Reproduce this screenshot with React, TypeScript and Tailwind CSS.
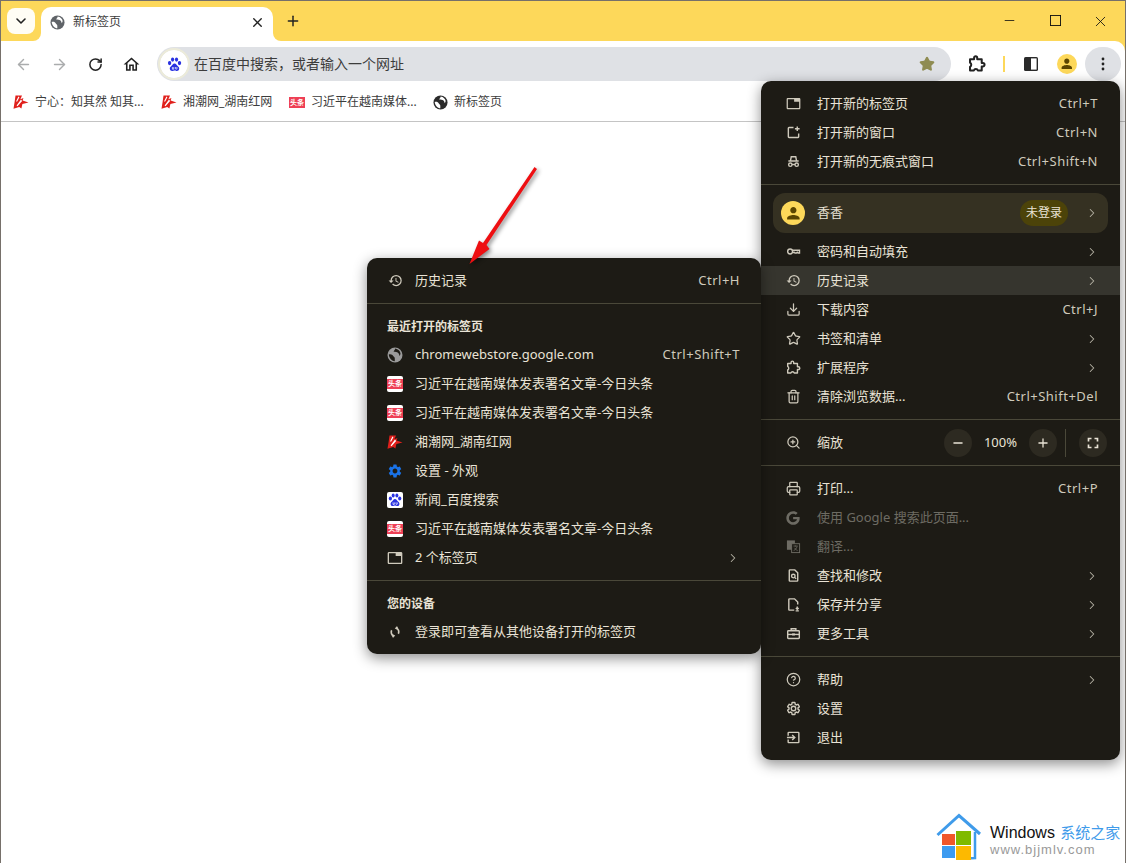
import React from "react";
import {
  ArrowLeft, ArrowRight, RotateCw, X, Plus, ChevronDown, ChevronRight, Minus, Star, Download, Trash2,
  ZoomIn, Printer, CircleHelp,
} from "lucide-react";
import { FaGoogle } from "react-icons/fa";

const P = {
  tab: "M21 3H3c-1.1 0-2 .9-2 2v14c0 1.1.9 2 2 2h18c1.1 0 2-.9 2-2V5c0-1.1-.9-2-2-2zm0 16H3V5h10v4h8v10z",
  history: "M13 3a9 9 0 0 0-9 9H1l3.89 3.89.07.14L9 12H6c0-3.87 3.13-7 7-7s7 3.13 7 7-3.13 7-7 7c-1.93 0-3.68-.79-4.94-2.06l-1.42 1.42A8.954 8.954 0 0 0 13 21a9 9 0 0 0 0-18zm-1 5v5l4.28 2.54.72-1.21-3.5-2.08V8H12z",
  person: "M12 12c2.21 0 4-1.79 4-4s-1.79-4-4-4-4 1.79-4 4 1.79 4 4 4zm0 2c-2.67 0-8 1.34-8 4v2h16v-2c0-2.66-5.33-4-8-4z",
  gear: "M19.14 12.94c.04-.3.06-.61.06-.94 0-.32-.02-.64-.07-.94l2.03-1.58a.49.49 0 0 0 .12-.61l-1.92-3.32a.488.488 0 0 0-.59-.22l-2.39.96c-.5-.38-1.03-.7-1.62-.94l-.36-2.54a.484.484 0 0 0-.48-.41h-3.84c-.24 0-.43.17-.47.41l-.36 2.54c-.59.24-1.13.57-1.62.94l-2.39-.96c-.22-.08-.47 0-.59.22L2.74 8.87c-.12.21-.08.47.12.61l2.03 1.58c-.05.3-.09.63-.09.94s.02.64.07.94l-2.03 1.58a.49.49 0 0 0-.12.61l1.92 3.32c.12.22.37.29.59.22l2.39-.96c.5.38 1.03.7 1.62.94l.36 2.54c.05.24.24.41.48.41h3.84c.24 0 .44-.17.47-.41l.36-2.54c.59-.24 1.13-.56 1.62-.94l2.39.96c.22.08.47 0 .59-.22l1.92-3.32c.12-.22.07-.47-.12-.61l-2.01-1.58zM12 15.6c-1.98 0-3.6-1.62-3.6-3.6s1.62-3.6 3.6-3.6 3.6 1.62 3.6 3.6-1.62 3.6-3.6 3.6z",
  home: "M12 5.69l5 4.5V18h-2v-6H9v6H7v-7.81l5-4.5M12 3L2 12h3v8h6v-6h2v6h6v-8h3L12 3z",
};

type IP = { className?: string };
const Fill = ({ d, className = "w-[15px] h-[15px]" }: { d: string; className?: string }) => (
  <svg viewBox="0 0 24 24" fill="currentColor" className={className}><path d={d} /></svg>
);
const Line = ({ className = "w-[15px] h-[15px]", children }: { className?: string; children: React.ReactNode }) => (
  <svg viewBox="0 0 16 16" fill="none" stroke="currentColor" strokeWidth="1.5" className={className}>{children}</svg>
);
const Globe = ({ className = "w-[15px] h-[15px]", hole = "#fff" }: { className?: string; hole?: string }) => (
  <svg viewBox="0 0 16 16" className={className}>
    <circle cx="8" cy="8" r="7.5" fill="currentColor" />
    <path d="M1.8 7.4c2.2-.6 3.6.2 4.4 1.6.5.9 1.6 1.1 1.6 2.4v2.8c-2.8-.4-5.6-2.8-6-6.8Z" fill={hole} />
    <path d="M8.2 1.5c-.2 1.6-1.4 2-1.6 3.2 1.8.2 3.4-.2 4.6 1.2.6.8 1.2 1.6 1.2 3 .6-.5 1-1.4 1.1-2.4-.3-2.3-2.3-4.6-5.3-5Z" fill={hole} />
  </svg>
);
const TabIcon = (p: IP) => <Fill d={P.tab} className={p.className} />;
const HistoryIcon = (p: IP) => <Fill d={P.history} className={p.className} />;
const GearOutline = () => (
  <svg viewBox="0 0 24 24" fill="none" stroke="currentColor" strokeWidth="2.2" className="w-[15px] h-[15px]"><path d={P.gear} /></svg>
);
const ExtOutline = ({ className = "w-[15px] h-[15px]", w = "1.5" }: { className?: string; w?: string }) => (
  <svg viewBox="0 0 16 16" fill="none" stroke="currentColor" strokeWidth={w} strokeLinejoin="round" className={className}>
    <path d="M1.8 3.8h3.6V2.6a1.4 1.4 0 0 1 2.8 0v1.2h4v3.4h1a1.5 1.5 0 0 1 0 3h-1v3.6H8.8a1.9 1.9 0 0 0-3.6 0H1.8v-3.2a2.2 2.2 0 0 0 0-3.8Z" />
  </svg>
);
const NewWin = () => (
  <Line><path d="M8 2.7H3.2a.7.7 0 0 0-.7.7v9.2c0 .4.3.7.7.7h9.6c.4 0 .7-.3.7-.7V9" /><path d="M12 1.5v5M9.5 4h5" /></Line>
);
const Incognito = () => (
  <Line>
    <path d="M2.5 7.4h11M4.8 7 5.6 3h4.8l.8 4" />
    <circle cx="4.6" cy="11.4" r="1.8" /><circle cx="11.4" cy="11.4" r="1.8" /><path d="M6.4 11.2h3.2" />
  </Line>
);
const KeyIcon = () => (
  <Line><circle cx="4.4" cy="8" r="2.6" /><path d="M7 6.6h7.4v3h-1.6l-.8-.8-.9.8H9.6l-.8-.8-1.6.2" /></Line>
);
const SaveIcon = () => (
  <Line>
    <path d="M8.8 14H3.7a.7.7 0 0 1-.7-.7V2.7c0-.4.3-.7.7-.7h5.4L12.5 5.4V8" /><path d="M12 10v3M10.5 11.8 12 13.2l1.5-1.4M10.3 14.8h3.4" />
  </Line>
);
const FindIcon = () => (
  <Line><path d="M9.4 2H4.2a.7.7 0 0 0-.7.7v10.6c0 .4.3.7.7.7h7.6c.4 0 .7-.3.7-.7V5L9.4 2Z" /><circle cx="7.8" cy="8.6" r="1.9" /><path d="m9.2 10 1.6 1.6" /></Line>
);
const ToolsIcon = () => (
  <svg viewBox="0 0 16 16" className="w-[15px] h-[15px]" fill="none" stroke="currentColor" strokeWidth="1.5">
    <path d="M5.5 5V3h5v2" /><rect x="1.8" y="5" width="12.4" height="8.4" rx=".8" /><path d="M1.8 9h12.4" /><path d="M6.5 9h3" strokeWidth="2.2" />
  </svg>
);
const ExitIcon = () => (
  <Line><path d="M2.3 6V3.2c0-.4.3-.7.7-.7h10c.4 0 .7.3.7.7v9.6c0 .4-.3.7-.7.7H3a.7.7 0 0 1-.7-.7V10" /><path d="M1 8h8M6.6 5.3 9.4 8l-2.8 2.7" /></Line>
);
const TranslateIcon = () => (
  <svg viewBox="0 0 16 16" className="w-[15px] h-[15px]">
    <rect x="1" y="1.5" width="8.5" height="10" fill="currentColor" />
    <rect x="6" y="5" width="8.5" height="9.5" fill="#1d1b15" stroke="currentColor" strokeWidth="1" />
    <path d="M8 7.5h4.5M10.2 7v1M11.8 8c-.5 2-2 3.6-3.6 4.2M9 9.4c.6 1.2 2 2.3 3.4 2.8" fill="none" stroke="currentColor" strokeWidth=".9" />
  </svg>
);
const SyncOff = () => (
  <svg viewBox="0 0 16 16" className="w-[14px] h-[14px]" fill="none" stroke="currentColor" strokeWidth="1.9">
    <path d="M9.4 3.4a4.8 4.8 0 0 1 2.4 6.6M6.6 12.6a4.8 4.8 0 0 1-2.4-6.6" /><path d="M10.8 2 9.3 3.7l2 .9M5.2 14l1.5-1.7-2-.9" />
  </svg>
);
const FullIcon = () => (
  <Line className="w-3 h-3"><path d="M2 6V2h4M10 2h4v4M14 10v4h-4M6 14H2v-4" strokeWidth="2.2" /></Line>
);
const SidePanel = () => (
  <svg viewBox="0 0 16 16" className="w-4 h-4">
    <rect x="1" y="1" width="14" height="14" rx="1.6" fill="#2a2a2a" /><rect x="8" y="2.4" width="5.6" height="11.2" fill="#fff" />
  </svg>
);
const Avatar = ({ className }: IP) => (
  <span className={`flex items-center justify-center rounded-full bg-[#fdd85a] text-[#5b4500] ${className}`}>
    <Fill d={P.person} className="w-[78%] h-[78%]" />
  </span>
);
const Hunan = () => (
  <svg viewBox="0 0 16 16" className="w-4 h-4 shrink-0">
    <path d="M2.5 1.5h6.5L7.4 5.2l3-1.2-.8 2.4L15.5 8.4 9.4 10l-1 4.5-2.2-1.4L.5 14.8 1.6 8Z" fill="#e0201c" />
    <path d="M5.4 2.5 3 7.4l1.2.2 2.2-4.4ZM8 5.6l-4.4 6 .9.7 4.6-5.2Z" fill="#fff" />
  </svg>
);
const Toutiao = ({ bar = false }: { bar?: boolean }) => (
  <span className={bar
    ? "flex w-4 h-[11px] shrink-0 items-center justify-center bg-[#ee3f55] text-[7px] leading-none font-bold text-white"
    : "flex w-4 h-4 shrink-0 items-center justify-center rounded-[2px] bg-white"}>
    {bar ? "头条" : <span className="flex w-4 h-[10px] items-center justify-center bg-[#ee3f55] text-[7px] leading-none font-bold text-white">头条</span>}
  </span>
);
const Paw = ({ className = "w-4 h-4" }: IP) => (
  <svg viewBox="0 0 16 16" className={className}>
    <g fill="#2932e1">
      <ellipse cx="3.4" cy="6.6" rx="1.6" ry="2" /><ellipse cx="6.2" cy="3.4" rx="1.5" ry="2" />
      <ellipse cx="9.9" cy="3.4" rx="1.5" ry="2" /><ellipse cx="12.7" cy="6.6" rx="1.6" ry="2" />
      <path d="M8 7c-1.6 0-2 1.6-3 2.4-1 .8-1.6 1.6-1.4 2.8.2 1.4 1.4 2 2.6 1.8 1-.1 1.2-.4 1.8-.4s.9.3 1.8.4c1.3.2 2.4-.4 2.6-1.8.2-1.2-.4-2-1.4-2.8C10 8.6 9.6 7 8 7Z" />
    </g>
    <path d="M6 10.4v2h1.3v-2M9 10.4v1.5c0 .7 1.3.7 1.3 0v-1.5" fill="none" stroke="#fff" strokeWidth=".7" />
  </svg>
);

const Sep = ({ className = "my-[7.5px]" }: { className?: string }) => <div className={`h-px bg-[#4a4839] ${className}`} />;
const Chev = () => <ChevronRight className="w-[14px] h-[14px] text-[#b5b2a4]" strokeWidth={1.8} />;

type Row = { i: React.ReactNode; t: string; s?: string; sub?: boolean; off?: boolean; hi?: boolean };

const MainRow = ({ i, t, s, sub, off, hi }: Row) => (
  <div className={`flex h-[29px] items-center pl-6 pr-[22px] ${hi ? "bg-[#36352e]" : ""} ${off ? "text-[#6d6b63]" : "text-[#e9e3d6]"}`}>
    <span className={`mr-4 flex w-4 justify-center ${off ? "text-[#6d6b63]" : "text-[#cfcabc]"}`}>{i}</span>
    <span className="flex-1 whitespace-nowrap">{t}</span>
    {s && <span className="tracking-[0.5px] text-[#cfcabc]">{s}</span>}
    {sub && <span className="-mr-px"><Chev /></span>}
  </div>
);
const SideRow = ({ i, t, s, sub }: Row) => (
  <div className="flex h-[29px] items-center pl-5 pr-[21px] text-[#e9e3d6]">
    <span className="mr-3 flex w-4 justify-center text-[#cfcabc]">{i}</span>
    <span className="flex-1 whitespace-nowrap">{t}</span>
    {s && <span className="tracking-[0.5px] text-[#cfcabc]">{s}</span>}
    {sub && <Chev />}
  </div>
);
const Heading = ({ t }: { t: string }) => (
  <div className="flex h-[29px] items-center pl-5 pt-[2px] text-xs font-bold text-[#e9e3d6]">{t}</div>
);
const TT = "习近平在越南媒体发表署名文章-今日头条";

const Bookmark = ({ i, t, className }: { i: React.ReactNode; t: string; className: string }) => (
  <div className={`flex items-center gap-[6px] text-xs text-[#3c3c3c] ${className}`}>{i}<span className="truncate">{t}</span></div>
);
const ToolBtn = ({ children, className = "" }: { children: React.ReactNode; className?: string }) => (
  <span className={`flex h-[34px] w-9 shrink-0 items-center justify-center ${className}`}>{children}</span>
);

export default function App() {
  return (
    <div className="relative flex h-[863px] w-[1126px] flex-col overflow-hidden border-x border-t border-[#76706a] bg-white font-['Noto_Sans','Noto_Sans_CJK_SC',sans-serif] text-[13px]">
      {/* window strip */}
      <div className="flex h-10 shrink-0 items-end bg-[#fdd85a]">
        <span className="mb-[7px] ml-[6px] flex h-[26px] w-7 items-center justify-center rounded-lg bg-[#fffdf5]">
          <ChevronDown className="w-4 h-4 text-[#222]" strokeWidth={2.4} />
        </span>
        <div className="relative ml-[6px] flex h-[34px] w-[232px] items-center rounded-t-[10px] bg-white pb-1 pl-[9px] pr-2 text-xs text-[#3c3c3c]">
          <span className="absolute -left-2 bottom-0 h-2 w-2 bg-white"><span className="block h-2 w-2 rounded-br-lg bg-[#fdd85a]" /></span>
          <span className="absolute -right-2 bottom-0 h-2 w-2 bg-white"><span className="block h-2 w-2 rounded-bl-lg bg-[#fdd85a]" /></span>
          <Globe className="mr-2 w-[15px] h-[15px] text-[#5f6368]" />
          <span className="flex-1">新标签页</span>
          <X className="w-[15px] h-[15px] text-[#222]" strokeWidth={2.2} />
        </div>
        <Plus className="mb-3 ml-[12px] w-4 h-4 text-[#222]" strokeWidth={2.2} />
        <div className="flex-1" />
        <div className="mb-[11px] flex text-[#111]">
          <span className="flex w-[46px] justify-center"><Minus className="w-[15px] h-[15px]" strokeWidth={1.3} /></span>
          <span className="flex w-[46px] justify-center">
            <svg viewBox="0 0 12 12" className="w-[11px] h-[11px] mt-[2px]" fill="none" stroke="currentColor"><rect x=".5" y=".5" width="11" height="11" /></svg>
          </span>
          <span className="flex w-[46px] justify-center pr-[2px]"><X className="w-[17px] h-[17px]" strokeWidth={1.2} /></span>
        </div>
        <div className="w-[1px]" />
      </div>
      <div className="shrink-0 bg-[#fdd85a]">
        {/* toolbar */}
        <div className="flex h-[44px] items-center rounded-tr-[10px] bg-white pl-1 pr-1 pt-[2px] text-[#222]">
          <ToolBtn><ArrowLeft className="w-[17px] h-[17px] text-[#aaacad]" strokeWidth={2} /></ToolBtn>
          <ToolBtn><ArrowRight className="w-[17px] h-[17px] text-[#aaacad]" strokeWidth={2} /></ToolBtn>
          <ToolBtn><RotateCw className="w-[15px] h-[15px]" strokeWidth={2.4} /></ToolBtn>
          <ToolBtn><Fill d={P.home} className="w-[19px] h-[19px]" /></ToolBtn>
          <div className="ml-2 flex h-[34px] flex-1 items-center rounded-full bg-[#dfe1e5] pl-[3px] pr-4">
            <span className="flex h-7 w-7 items-center justify-center rounded-full bg-white outline-2 outline-[#ecebd9]"><Paw className="w-[17px] h-[17px]" /></span>
            <span className="ml-[6px] flex-1 text-sm text-[#3c3c3c]">在百度中搜索，或者输入一个网址</span>
            <Star className="w-4 h-4 text-[#8f8c52]" fill="#8f8c52" />
          </div>
          <ToolBtn className="ml-2"><ExtOutline className="w-[18px] h-[18px]" w="1.8" /></ToolBtn>
          <span className="flex h-4 w-[18px] shrink-0 justify-center"><span className="w-[2px] bg-[#fdd85a]" /></span>
          <ToolBtn><SidePanel /></ToolBtn>
          <ToolBtn><Avatar className="w-5 h-5" /></ToolBtn>
          <ToolBtn className="rounded-full bg-[#dfe1e5]">
            <svg viewBox="0 0 16 16" className="w-4 h-4" fill="#222"><circle cx="8" cy="3" r="1.4" /><circle cx="8" cy="8" r="1.4" /><circle cx="8" cy="13" r="1.4" /></svg>
          </ToolBtn>
        </div>
      </div>
      {/* bookmarks */}
      <div className="flex h-[37px] shrink-0 items-center border-b border-[#c4c4c4] pb-[2px] pl-3">
        <Bookmark className="w-[148px]" i={<Hunan />} t="宁心：知其然 知其..." />
        <Bookmark className="w-[128px]" i={<Hunan />} t="湘潮网_湖南红网" />
        <Bookmark className="w-[144px]" i={<Toutiao bar />} t="习近平在越南媒体..." />
        <Bookmark className="w-[90px]" i={<Globe className="w-[15px] h-[15px] text-[#2a2a2a]" />} t="新标签页" />
      </div>
      <div className="flex-1 bg-white" />

      {/* chrome menu */}
      <div className="absolute left-[760px] top-[80px] w-[359px] rounded-[10px] bg-[#1d1b15] pb-2 pt-2 shadow-[0_4px_14px_rgba(0,0,0,0.45)]">
        <MainRow i={<TabIcon />} t="打开新的标签页" s="Ctrl+T" />
        <MainRow i={<NewWin />} t="打开新的窗口" s="Ctrl+N" />
        <MainRow i={<Incognito />} t="打开新的无痕式窗口" s="Ctrl+Shift+N" />
        <Sep className="my-2" />
        <div className="mx-3 flex h-10 items-center rounded-[12px] bg-[#353122] pl-2 pr-[9px] text-[#e9e3d6]">
          <Avatar className="mr-3 w-6 h-6" />
          <span className="flex-1">香香</span>
          <span className="mr-[17px] flex h-[26px] w-12 items-center justify-center rounded-full bg-[#4c4309] text-xs">未登录</span>
          <Chev />
        </div>
        <div className="h-1" />
        <MainRow i={<KeyIcon />} t="密码和自动填充" sub />
        <MainRow i={<HistoryIcon />} t="历史记录" sub hi />
        <MainRow i={<Download className="w-[15px] h-[15px]" />} t="下载内容" s="Ctrl+J" />
        <MainRow i={<Star className="w-[15px] h-[15px]" />} t="书签和清单" sub />
        <MainRow i={<ExtOutline />} t="扩展程序" sub />
        <MainRow i={<Trash2 className="w-[15px] h-[15px]" />} t="清除浏览数据..." s="Ctrl+Shift+Del" />
        <Sep className="mb-2 mt-2" />
        <div className="flex h-[29px] items-center pl-6 pr-[13px] text-[#e9e3d6]">
          <span className="mr-4 flex w-4 justify-center text-[#cfcabc]"><ZoomIn className="w-[15px] h-[15px]" /></span>
          <span className="flex-1">缩放</span>
          <span className="flex h-7 w-7 items-center justify-center rounded-full bg-[#2d2a21]"><Minus className="w-3.5 h-3.5" strokeWidth={2.2} /></span>
          <span className="w-[57px] text-center">100%</span>
          <span className="flex h-7 w-7 items-center justify-center rounded-full bg-[#2d2a21]"><Plus className="w-3.5 h-3.5" strokeWidth={2.2} /></span>
          <span className="ml-2 mr-[9px] h-7 w-px bg-[#4a4839]" />
          <span className="ml-[4px] flex h-7 w-7 items-center justify-center rounded-full bg-[#2d2a21]"><FullIcon /></span>
        </div>
        <Sep className="mb-2 mt-2" />
        <MainRow i={<Printer className="w-[15px] h-[15px]" />} t="打印..." s="Ctrl+P" />
        <MainRow i={<FaGoogle className="w-[14px] h-[14px]" />} t="使用 Google 搜索此页面..." off />
        <MainRow i={<TranslateIcon />} t="翻译..." off />
        <MainRow i={<FindIcon />} t="查找和修改" sub />
        <MainRow i={<SaveIcon />} t="保存并分享" sub />
        <MainRow i={<ToolsIcon />} t="更多工具" sub />
        <Sep className="my-2" />
        <MainRow i={<CircleHelp className="w-[15px] h-[15px]" />} t="帮助" sub />
        <MainRow i={<GearOutline />} t="设置" />
        <MainRow i={<ExitIcon />} t="退出" />
      </div>

      {/* history submenu */}
      <div className="absolute left-[366px] top-[257px] w-[394px] rounded-[10px] bg-[#1d1b15] pb-2 pt-2 shadow-[0_4px_14px_rgba(0,0,0,0.45)]">
        <SideRow i={<HistoryIcon />} t="历史记录" s="Ctrl+H" />
        <Sep />
        <Heading t="最近打开的标签页" />
        <SideRow i={<Globe className="w-4 h-4 text-[#9a9a9a]" hole="#1d1b15" />} t="chromewebstore.google.com" s="Ctrl+Shift+T" />
        <SideRow i={<Toutiao />} t={TT} />
        <SideRow i={<Toutiao />} t={TT} />
        <SideRow i={<Hunan />} t="湘潮网_湖南红网" />
        <SideRow i={<Fill d={P.gear} className="w-4 h-4 text-[#1a73e8]" />} t="设置 - 外观" />
        <SideRow i={<span className="flex h-4 w-4 rounded-[2px] bg-white"><Paw /></span>} t="新闻_百度搜索" />
        <SideRow i={<Toutiao />} t={TT} />
        <SideRow i={<TabIcon className="w-4 h-4" />} t="2 个标签页" sub />
        <Sep />
        <Heading t="您的设备" />
        <SideRow i={<SyncOff />} t="登录即可查看从其他设备打开的标签页" />
      </div>

      {/* annotation arrow */}
      <svg className="absolute left-[460px] top-[160px] h-[112px] w-[84px] drop-shadow-[2px_2px_2px_rgba(0,0,0,0.45)]" viewBox="0 0 84 112">
        <path d="M73.5 6 76 8 25.5 84 28.5 88 8.5 103 18 79.5 22 82Z" fill="#ee0f12" />
      </svg>

      {/* watermark */}
      <div className="absolute bottom-0 right-0 flex h-[52px] w-[193px] items-center rounded-tl-md bg-white pl-1">
        <svg viewBox="0 0 46 48" className="w-[46px] h-[48px] shrink-0">
          <path d="M1.5 22 23 2.5 44 21" fill="none" stroke="#3f9bea" strokeWidth="3" />
          <path d="M39 19v26l-9 .5" fill="none" stroke="#3f9bea" strokeWidth="2.5" />
          <rect x="6" y="21" width="13" height="11" fill="#f0562a" />
          <rect x="20" y="18" width="15" height="14" fill="#7fba00" />
          <rect x="6" y="33" width="13" height="12" fill="#3d9bf0" />
          <rect x="20" y="33" width="15" height="14" fill="#fdb900" />
        </svg>
        <div className="ml-2 flex flex-col pt-[6px] font-['Liberation_Sans','Noto_Sans_CJK_SC',sans-serif]">
          <span className="whitespace-nowrap text-base leading-[20px] text-[#111]">Windows <span className="ml-[1px] text-[15px] text-[#3f9bea]">系统之家</span></span>
          <span className="whitespace-nowrap text-[13px] leading-[14px] tracking-[1px] text-[#999]">www.bjjmlv.com</span>
        </div>
      </div>
    </div>
  );
}
